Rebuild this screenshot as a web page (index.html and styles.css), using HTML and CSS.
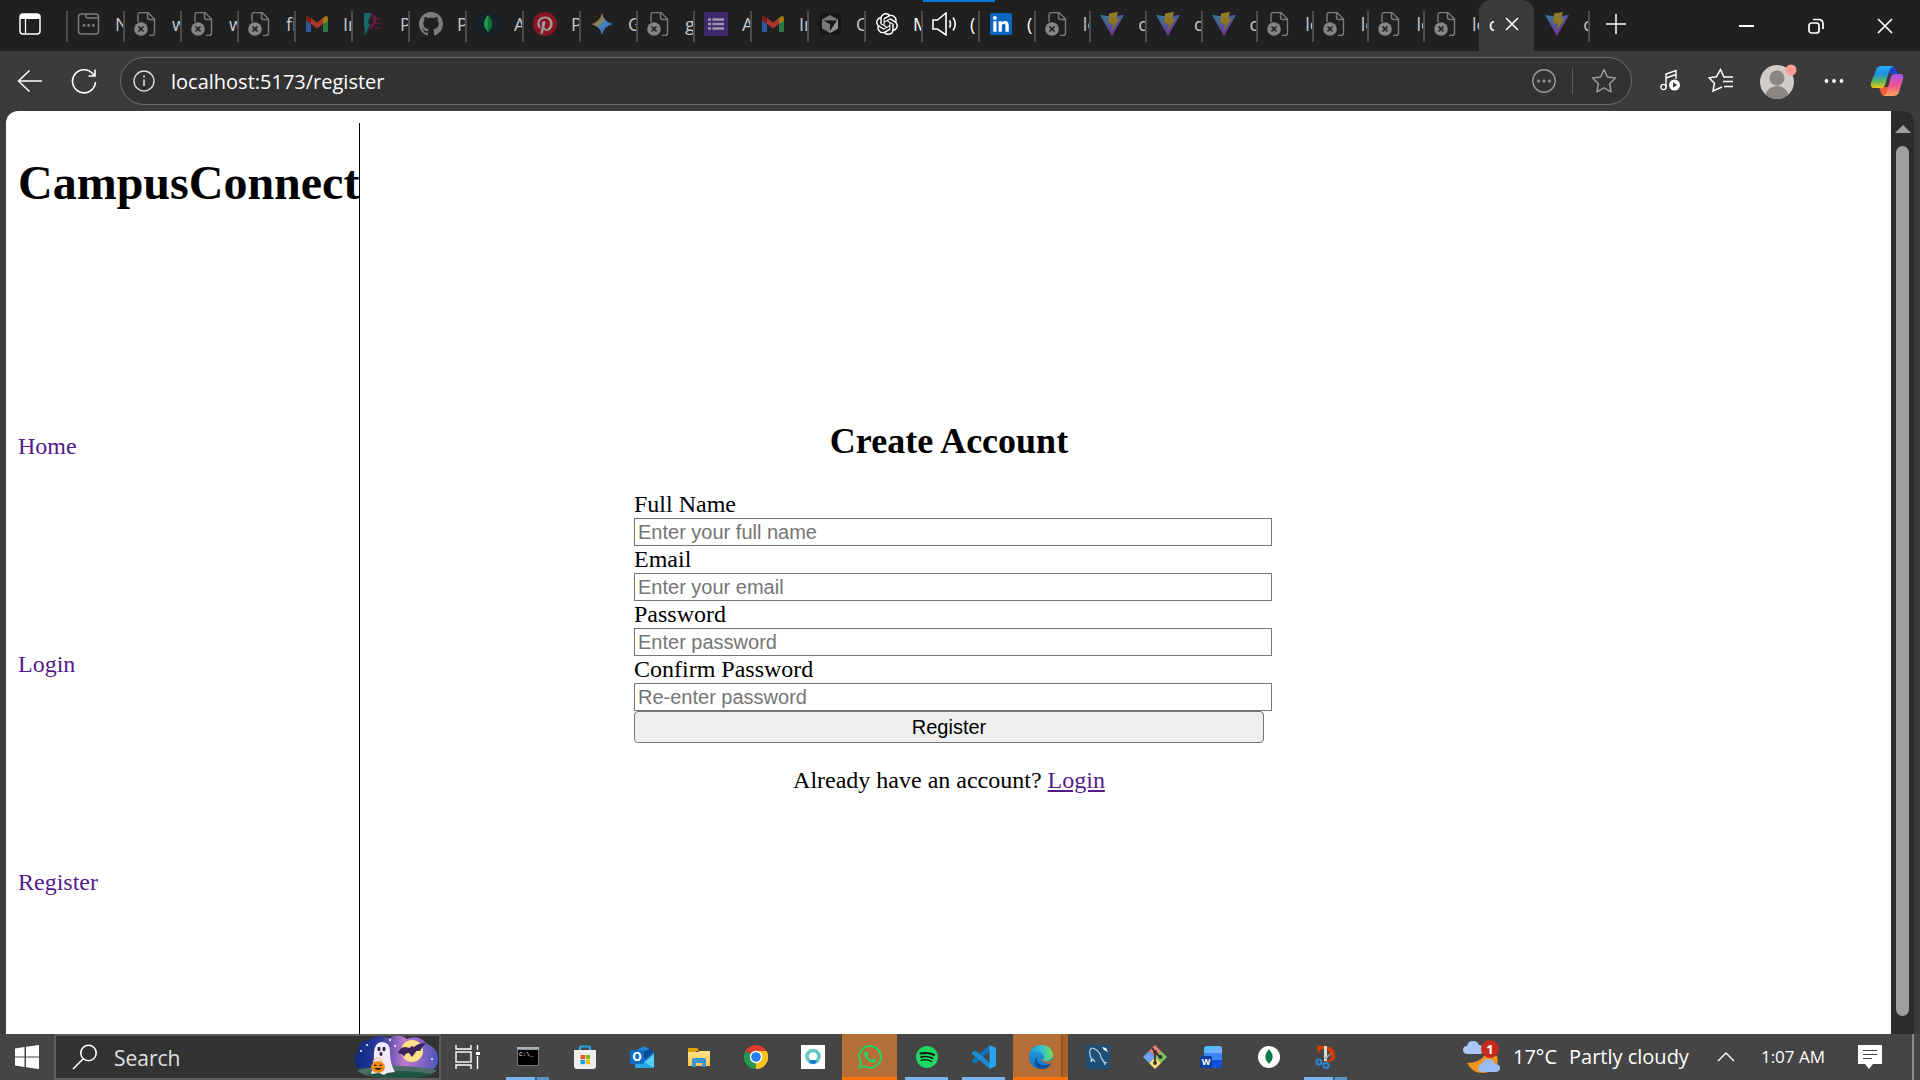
FILE: index.html
```html
<!DOCTYPE html>
<html lang="en">
<head>
<meta charset="utf-8">
<title>CampusConnect</title>
<link rel="stylesheet" href="styles.css">
</head>
<body>
<svg class="sprite" aria-hidden="true">
  <defs>
    <linearGradient id="g-gemini" x1="0" y1="0" x2="1" y2="1"><stop offset=".2" stop-color="#c5443c"/><stop offset=".4" stop-color="#7d8a5a"/><stop offset=".55" stop-color="#3f7ac4"/><stop offset="1" stop-color="#3f7ac4"/></linearGradient>
    <linearGradient id="g-vite" x1="0" y1="0" x2=".6" y2="1"><stop offset="0" stop-color="#2f7f9c"/><stop offset="1" stop-color="#742f9a"/></linearGradient>
    <linearGradient id="g-bolt" x1="0" y1="0" x2="0" y2="1"><stop offset="0" stop-color="#8f8030"/><stop offset="1" stop-color="#8f6a10"/></linearGradient>
    <linearGradient id="g-cop1" x1="0" y1="0" x2="0" y2="1"><stop offset="0" stop-color="#28b0f5"/><stop offset=".35" stop-color="#1b8fe8"/><stop offset=".7" stop-color="#5fb85a"/><stop offset="1" stop-color="#f2c811"/></linearGradient>
    <linearGradient id="g-cop2" x1="0" y1="0" x2="0" y2="1"><stop offset="0" stop-color="#a855f0"/><stop offset=".5" stop-color="#ee5090"/><stop offset="1" stop-color="#ffa657"/></linearGradient>
    <linearGradient id="g-edge" x1="0" y1="0" x2="1" y2="0"><stop offset="0" stop-color="#2294dd"/><stop offset=".5" stop-color="#35c1d0"/><stop offset="1" stop-color="#6fe05a"/></linearGradient>
    <linearGradient id="g-edge2" x1="0" y1="0" x2="0" y2="1"><stop offset="0" stop-color="#2aa5e0"/><stop offset="1" stop-color="#0a6fc9"/></linearGradient>
    <linearGradient id="g-word" x1="0" y1="0" x2="1" y2="1"><stop offset="0" stop-color="#3cc7f5"/><stop offset="1" stop-color="#8fa5ff"/></linearGradient>
    <linearGradient id="g-night" x1="0" y1="0" x2="1" y2="0"><stop offset="0" stop-color="#0b2a7e"/><stop offset=".3" stop-color="#2a3b9c"/><stop offset=".6" stop-color="#c07ad0"/><stop offset="1" stop-color="#4a55bb"/></linearGradient>
    <linearGradient id="g-folder" x1="0" y1="0" x2="0" y2="1"><stop offset="0" stop-color="#ffe08a"/><stop offset="1" stop-color="#fdc94a"/></linearGradient>
  </defs>
  <symbol id="i-newtab" viewBox="0 0 24 24"><g fill="none" stroke="#7b7b7b" stroke-width="1.5"><rect x="1.5" y="2" width="20" height="20" rx="3"/><path d="M9 2v2.5q0 1.500 1.500 1.500H21.500"/></g><g fill="#7b7b7b"><circle cx="7" cy="13.500" r="1.400"/><circle cx="11.700" cy="13.500" r="1.400"/><circle cx="16.400" cy="13.500" r="1.400"/></g></symbol>
  <symbol id="i-filex" viewBox="0 0 24 24"><g fill="none" stroke="#7b7b7b" stroke-width="1.4"><path d="M4 10V3q0-2.500 2.500-2.500H14l6.500 6.500V21q0 2.500-2.500 2.500H15M13.500 1v4.500q0 2 2 2H20"/></g><circle cx="7" cy="17" r="6.800" fill="#858585"/><path d="M4.500 14.500l5 5m0-5l-5 5" stroke="#202020" stroke-width="1.700"/></symbol>
  <symbol id="i-gmail" viewBox="0 0 24 24"><path d="M1 8v11q0 1 1 1h4V10z" fill="#32569c"/><path d="M18 20h4q1 0 1-1V7l-5 4z" fill="#2b7a42"/><path d="M1 6.500v2L6 12V6L4 4.500Q1.500 3 1 6.500z" fill="#7a2019"/><path d="M6 6v6l6 4.500 6-4.500V6l-6 4.500z" fill="#a9352b"/><path d="M18 6v6l5-3.500v-2Q22.500 3 20 4.500z" fill="#a67c0c"/></symbol>
  <symbol id="i-pen" viewBox="0 0 24 24"><path d="M2 1h7.500L6 10l2 3-5.500 11q1-8-.5-10z" fill="#176a6b"/><path d="M8 1q3 1 2.500 6T7 14q4-1 4.500-5T9 1q6 2 5.500 8T5 19q4-3 5-8t-2-10z" fill="#70173a"/><path d="M13.500 7h5M14 11.500h5.500M13 16h6" stroke="#5b1a36" stroke-width="1.500"/></symbol>
  <symbol id="i-github" viewBox="0 0 16 16"><path fill="#7d7d7d" d="M8 0C3.58 0 0 3.58 0 8c0 3.54 2.29 6.53 5.47 7.59.4.07.55-.17.55-.38 0-.19-.01-.82-.01-1.49-2.010.37-2.530-.49-2.690-.94-.09-.23-.48-.94-.82-1.130-.28-.15-.68-.52-.01-.53.63-.01 1.080.58 1.230.82.72 1.210 1.870.87 2.330.66.07-.52.28-.87.51-1.070-1.780-.2-3.640-.89-3.640-3.950 0-.87.31-1.590.82-2.150-.08-.2-.36-1.020.08-2.120 0 0 .67-.21 2.200.82.64-.18 1.320-.27 2-.27.68 0 1.360.09 2 .27 1.530-1.040 2.200-.82 2.200-.82.44 1.100.16 1.920.08 2.120.51.56.82 1.270.82 2.150 0 3.070-1.870 3.750-3.650 3.950.29.25.54.73.54 1.480 0 1.070-.01 1.930-.01 2.200 0 .21.15.46.55.38A8.013 8.013 0 0016 8c0-4.420-3.580-8-8-8z"/></symbol>
  <symbol id="i-mongo" viewBox="0 0 24 24"><circle cx="12" cy="12" r="12" fill="#15222a"/><path d="M12 3q-4 4-4 9 0 4 3.500 7l.5 2 .5-2q3.500-3 3.500-7 0-5-4-9z" fill="#18984a"/><path d="M12 3v18l.5-2q3.500-3 3.500-7 0-5-4-9z" fill="#107038"/></symbol>
  <symbol id="i-pinterest" viewBox="0 0 24 24"><circle cx="12" cy="12" r="11" fill="#9b9b9b"/><path fill="#8a1520" d="M12.017 0C5.396 0 .029 5.367.029 11.987c0 5.079 3.158 9.417 7.618 11.162-.105-.949-.199-2.403.041-3.439.219-.937 1.406-5.957 1.406-5.957s-.359-.72-.359-1.781c0-1.663.967-2.911 2.168-2.911 1.024 0 1.518.769 1.518 1.688 0 1.029-.653 2.567-.992 3.992-.285 1.193.6 2.165 1.775 2.165 2.128 0 3.768-2.245 3.768-5.487 0-2.861-2.063-4.869-5.008-4.869-3.410 0-5.409 2.562-5.409 5.199 0 1.033.394 2.143.889 2.741.099.12.112.225.085.345-.09.375-.293 1.199-.334 1.363-.053.225-.172.271-.401.165-1.495-.69-2.433-2.878-2.433-4.646 0-3.776 2.748-7.252 7.920-7.252 4.158 0 7.392 2.967 7.392 6.923 0 4.135-2.607 7.462-6.233 7.462-1.214 0-2.354-.629-2.758-1.379l-.749 2.848c-.269 1.045-1.004 2.352-1.498 3.146 1.123.345 2.306.535 3.550.535 6.607 0 11.985-5.365 11.985-11.987C23.970 5.390 18.592.026 11.985.026z"/></symbol>
  <symbol id="i-gemini" viewBox="0 0 24 24"><path d="M12 1q2 9 11 11-9 2-11 11-2-9-11-11Q10 10 12 1z" fill="url(#g-gemini)"/></symbol>
  <symbol id="i-forms" viewBox="0 0 24 24"><rect width="24" height="24" rx="1" fill="#40286e"/><path d="M8.500 7.500H20M8.500 12H20M8.500 16.500H20M4 7.500h3M4 12h3M4 16.500h3" stroke="#9c93ad" stroke-width="2.600"/></symbol>
  <symbol id="i-cursor" viewBox="0 0 24 24"><rect x="1" y="1" width="22" height="22" rx="4" fill="#171715"/><path d="M12 3l8 4.500v9L12 21l-8-4.500v-9z" fill="#777"/><path d="M12 12v9l8-4.500v-9z" fill="#929292"/><path d="M5.500 8.500H19L12 19v-7z" fill="#171715"/></symbol>
  <symbol id="i-openai" viewBox="0 0 24 24"><path fill="#fff" d="M22.2819 9.8211a5.9847 5.9847 0 0 0-.5157-4.9108 6.0462 6.0462 0 0 0-6.5098-2.9A6.0651 6.0651 0 0 0 4.9807 4.1818a5.9847 5.9847 0 0 0-3.9977 2.9 6.0462 6.0462 0 0 0 .7427 7.0966 5.98 5.98 0 0 0 .511 4.9107 6.051 6.051 0 0 0 6.5146 2.9001A5.9847 5.9847 0 0 0 13.2599 24a6.0557 6.0557 0 0 0 5.7718-4.2058 5.9894 5.9894 0 0 0 3.9977-2.9001 6.0557 6.0557 0 0 0-.7475-7.0729zm-9.022 12.6081a4.4755 4.4755 0 0 1-2.8764-1.0408l.1419-.0804 4.7783-2.7582a.7948.7948 0 0 0 .3927-.6813v-6.7369l2.02 1.1686a.071.071 0 0 1 .038.052v5.5826a4.504 4.504 0 0 1-4.4945 4.4944zm-9.6607-4.1254a4.4708 4.4708 0 0 1-.5346-3.0137l.142.0852 4.783 2.7582a.7712.7712 0 0 0 .7806 0l5.8428-3.3685v2.3324a.0804.0804 0 0 1-.0332.0615L9.74 19.9502a4.4992 4.4992 0 0 1-6.1408-1.6464zM2.3408 7.8956a4.485 4.485 0 0 1 2.3655-1.9728V11.6a.7664.7664 0 0 0 .3879.6765l5.8144 3.3543-2.0201 1.1685a.0757.0757 0 0 1-.071 0l-4.8303-2.7865A4.504 4.504 0 0 1 2.3408 7.872zm16.5963 3.8558L13.1038 8.364 15.1192 7.2a.0757.0757 0 0 1 .071 0l4.8303 2.7913a4.4944 4.4944 0 0 1-.6765 8.1042v-5.6772a.79.79 0 0 0-.407-.667zm2.0107-3.0231l-.142-.0852-4.7735-2.7818a.7759.7759 0 0 0-.7854 0L9.409 9.2297V6.8974a.0662.0662 0 0 1 .0284-.0615l4.8303-2.7866a4.4992 4.4992 0 0 1 6.6802 4.66zM8.3065 12.863l-2.02-1.1638a.0804.0804 0 0 1-.038-.0567V6.0742a4.4992 4.4992 0 0 1 7.3757-3.4537l-.142.0805L8.704 5.459a.7948.7948 0 0 0-.3927.6813zm1.0976-2.3654l2.602-1.4998 2.6069 1.4998v2.9994l-2.5974 1.4997-2.6067-1.4997Z"/></symbol>
  <symbol id="i-audio" viewBox="0 0 24 24"><path d="M1 8h4.500L14 1v22l-8.500-6H1zM17.500 8.500q2 3.500 0 7M21 5.500q4.500 6.500 0 13" fill="none" stroke="#fff" stroke-width="1.600"/></symbol>
  <symbol id="i-linkedin" viewBox="0 0 24 24"><rect width="24" height="24" rx="2" fill="#0a66c2"/><path fill="#fff" d="M20.447 20.452h-3.554v-5.569c0-1.328-.027-3.037-1.852-3.037-1.853 0-2.136 1.445-2.136 2.939v5.667H9.351V9h3.414v1.561h.046c.477-.9 1.637-1.850 3.370-1.850 3.601 0 4.267 2.370 4.267 5.455v6.286zM5.337 7.433c-1.144 0-2.063-.926-2.063-2.065 0-1.138.92-2.063 2.063-2.063 1.140 0 2.064.925 2.064 2.063 0 1.139-.925 2.065-2.064 2.065zm1.782 13.019H3.555V9h3.564v11.452z"/></symbol>
  <symbol id="i-vite" viewBox="0 0 24 24"><path d="M0 3l11 1.500L24 3 12 24z" fill="url(#g-vite)"/><path d="M9 1.500L18 0l-2 6.500h3.500L12 18.500l1-7H8z" fill="url(#g-bolt)"/></symbol>
</svg>

<header class="titlebar">
  <button class="workspace" aria-label="Tab actions"><svg width="24" height="24" viewBox="0 0 24 24"><rect x="2" y="2" width="20" height="20" rx="3" fill="none" stroke="#fff" stroke-width="1.500"/><path d="M2 7V5q0-3 3-3h14q3 0 3 3v2z" fill="#fff"/><path d="M7.500 7v14" stroke="#fff" stroke-width="1.300"/></svg></button>
  <nav class="tabs" aria-label="Open tabs">
    <button class="tab"><svg class="ico"><use href="#i-newtab"/></svg><span>N</span></button>
    <button class="tab"><svg class="ico"><use href="#i-filex"/></svg><span>w</span></button>
    <button class="tab"><svg class="ico"><use href="#i-filex"/></svg><span>w</span></button>
    <button class="tab"><svg class="ico"><use href="#i-filex"/></svg><span>fi</span></button>
    <button class="tab"><svg class="ico"><use href="#i-gmail"/></svg><span>In</span></button>
    <button class="tab"><svg class="ico"><use href="#i-pen"/></svg><span>P</span></button>
    <button class="tab"><svg class="ico"><use href="#i-github"/></svg><span>P</span></button>
    <button class="tab"><svg class="ico"><use href="#i-mongo"/></svg><span>A</span></button>
    <button class="tab"><svg class="ico"><use href="#i-pinterest"/></svg><span>P</span></button>
    <button class="tab"><svg class="ico"><use href="#i-gemini"/></svg><span>G</span></button>
    <button class="tab"><svg class="ico"><use href="#i-filex"/></svg><span>g</span></button>
    <button class="tab"><svg class="ico"><use href="#i-forms"/></svg><span>A</span></button>
    <button class="tab"><svg class="ico"><use href="#i-gmail"/></svg><span>In</span></button>
    <button class="tab"><svg class="ico"><use href="#i-cursor"/></svg><span>C</span></button>
    <button class="tab awake"><svg class="ico ico-s"><use href="#i-openai"/></svg><span>M</span></button>
    <button class="tab awake"><svg class="ico"><use href="#i-audio"/></svg><span>(</span></button>
  </nav>
  <nav class="tabs tabs-end" aria-label="More open tabs">
    <button class="tab awake"><svg class="ico ico-s"><use href="#i-linkedin"/></svg><span>(</span></button>
    <button class="tab"><svg class="ico"><use href="#i-filex"/></svg><span>lo</span></button>
    <button class="tab"><svg class="ico"><use href="#i-vite"/></svg><span>c</span></button>
    <button class="tab"><svg class="ico"><use href="#i-vite"/></svg><span>c</span></button>
    <button class="tab"><svg class="ico"><use href="#i-vite"/></svg><span>c</span></button>
    <button class="tab"><svg class="ico"><use href="#i-filex"/></svg><span>lo</span></button>
    <button class="tab"><svg class="ico"><use href="#i-filex"/></svg><span>lo</span></button>
    <button class="tab"><svg class="ico"><use href="#i-filex"/></svg><span>lo</span></button>
    <button class="tab"><svg class="ico"><use href="#i-filex"/></svg><span>lo</span></button>
    <div class="tab-active"><span>c</span><button aria-label="Close tab"><svg width="14" height="14" viewBox="0 0 14 14"><path d="M1 1l12 12M13 1L1 13" stroke="#fff" stroke-width="1.600"/></svg></button></div>
    <button class="tab last"><svg class="ico"><use href="#i-vite"/></svg><span>c</span></button>
  </nav>
  <button class="new-tab" aria-label="New tab"><svg width="22" height="22" viewBox="0 0 22 22"><path d="M11 1v20M1 11h20" stroke="#fff" stroke-width="1.500"/></svg></button>
  <div class="window-controls">
    <button aria-label="Minimize"><svg width="16" height="16" viewBox="0 0 16 16"><path d="M0 8h15" stroke="#fff" stroke-width="2"/></svg></button>
    <button aria-label="Restore"><svg width="16" height="16" viewBox="0 0 16 16"><g fill="none" stroke="#fff" stroke-width="1.700"><rect x="1" y="5" width="10" height="10" rx="2.500"/><path d="M5 1.500h5.500q4.500 0 4.500 4.500v5"/></g></svg></button>
    <button aria-label="Close"><svg width="16" height="16" viewBox="0 0 16 16"><path d="M1 1l14 14M15 1L1 15" stroke="#fff" stroke-width="1.700"/></svg></button>
  </div>
</header>

<div class="toolbar">
  <button aria-label="Back"><svg width="26" height="24" viewBox="0 0 26 24"><path d="M1 12h24M12.500 1.500L1.500 12l11 10.500" fill="none" stroke="#fff" stroke-width="1.500"/></svg></button>
  <button aria-label="Refresh"><svg width="26" height="26" viewBox="0 0 26 26"><path d="M24.500 14A11.500 11.500 0 1 1 21.500 5.500L24 8M24 1.500V8h-6.500" fill="none" stroke="#fff" stroke-width="1.600"/></svg></button>
  <div class="address">
    <svg width="22" height="22" viewBox="0 0 22 22"><circle cx="11" cy="11" r="10" fill="none" stroke="#ddd" stroke-width="1.400"/><path d="M11 9.500V16M11 5.500v2" stroke="#ddd" stroke-width="1.600"/></svg>
    <input type="text" aria-label="Address" value="localhost:5173/register">
    <button aria-label="Page options"><svg width="24" height="24" viewBox="0 0 24 24"><circle cx="12" cy="12" r="11.200" fill="none" stroke="#9a9a9a" stroke-width="1.400"/><g fill="#9a9a9a"><circle cx="6.500" cy="12" r="1.500"/><circle cx="12" cy="12" r="1.500"/><circle cx="17.500" cy="12" r="1.500"/></g></svg></button>
    <button class="favorite" aria-label="Add to favorites"><svg width="26" height="26" viewBox="0 0 24 24"><path d="M12 1.500l3.200 6.800 7.300 1-5.300 5.200 1.300 7.500-6.500-3.700L5.500 22l1.300-7.500L1.500 9.300l7.300-1z" fill="none" stroke="#9a9a9a" stroke-width="1.400" stroke-linejoin="round"/></svg></button>
  </div>
  <div class="actions">
    <button aria-label="Media"><svg width="22" height="24" viewBox="0 0 22 24"><g fill="none" stroke="#fff" stroke-width="1.400"><path d="M6 18V5l10-3.500V10M6 9l10-3.500"/><circle cx="3.500" cy="18" r="2.600"/></g><circle cx="14.500" cy="16" r="5.500" fill="#fff"/><path d="M13 13.200v5.600l4.200-2.800z" fill="#3b3b3b"/></svg></button>
    <button aria-label="Favorites"><svg width="26" height="26" viewBox="0 0 26 26"><path d="M14 19l-9 4 1.400-7.800L1 9.800l7.400-1L12.500 1.500 16 9h9M15 13.500h10M16 18.500h9" fill="none" stroke="#fff" stroke-width="1.500"/></svg></button>
    <button aria-label="Profile"><svg width="38" height="38" viewBox="0 0 38 38"><defs><clipPath id="c-av"><circle cx="17" cy="20" r="17"/></clipPath></defs><g clip-path="url(#c-av)"><rect width="38" height="38" fill="#cfccc9"/><circle cx="17" cy="16" r="7.500" fill="#8b8683"/><circle cx="17" cy="36" r="12" fill="#8b8683"/></g><circle cx="31" cy="8" r="5.500" fill="#fa9c98"/></svg></button>
    <button aria-label="Settings"><svg width="20" height="6" viewBox="0 0 20 6"><g fill="#fff"><circle cx="2.500" cy="3" r="1.900"/><circle cx="10" cy="3" r="1.900"/><circle cx="17.500" cy="3" r="1.900"/></g></svg></button>
    <button aria-label="Copilot"><svg width="34" height="32" viewBox="0 0 34 32"><path d="M17 1h6q2 0 3 3l2 5h-8z" fill="#1a48c8"/><path d="M9 22l2 6q1 3 4 3h5l4-9z" fill="#f0603c"/><path d="M11 1h13q-4 1-5 6l-4 13q-1 3-4 3H4q-4 0-3-5L6 5q1-4 5-4z" fill="url(#g-cop1)"/><path d="M23 31H13q3-1 4-5l4-14q1-3 4-3h5q4 0 3 5l-4 13q-1 4-6 4z" fill="url(#g-cop2)"/></svg></button>
  </div>
</div>

<div class="viewport">
  <div class="page">
    <div class="layout">
      <aside class="sidebar">
        <h1>CampusConnect</h1>
        <a href="#home">Home</a>
        <a href="#login">Login</a>
        <a href="#register">Register</a>
      </aside>
      <main class="content">
        <section class="signup">
          <h2>Create Account</h2>
          <form>
            <label for="name">Full Name</label>
            <input id="name" type="text" placeholder="Enter your full name">
            <label for="email">Email</label>
            <input id="email" type="email" placeholder="Enter your email">
            <label for="password">Password</label>
            <input id="password" type="password" placeholder="Enter password">
            <label for="confirm">Confirm Password</label>
            <input id="confirm" type="password" placeholder="Re-enter password">
            <button type="submit">Register</button>
          </form>
          <p>Already have an account? <a href="#login">Login</a></p>
        </section>
      </main>
    </div>
  </div>
  <div class="scrollbar"><svg width="16" height="8" viewBox="0 0 16 8"><path d="M8 0l8 8H0z" fill="#9f9f9f"/></svg><div class="thumb"></div></div>
</div>

<footer class="taskbar">
  <button class="start" aria-label="Start"><svg width="24" height="24" viewBox="0 0 24 24"><path fill="#fff" d="M0 3.500L9.500 2v9.500H0zM11 1.800L24 0v11.500H11zM0 12.500h9.500V22L0 20.500zM11 12.500h13V24l-13-1.800z"/></svg></button>
  <div class="search">
    <svg width="26" height="26" viewBox="0 0 26 26"><circle cx="16.500" cy="9" r="7.700" fill="none" stroke="#fff" stroke-width="1.600"/><path d="M11 15L1 25" stroke="#fff" stroke-width="1.600"/></svg>
    <input type="text" aria-label="Search" placeholder="Search">
    <svg width="84" height="42" viewBox="0 0 84 42"><path d="M2 32Q-3 22 3 15 5 4 16 3 22-2 34 2 44-3 52 3 64-2 72 8 84 12 83 24q0 8-8 10z" fill="url(#g-night)"/><path d="M2 34q38-8 80 0-6 8-40 8Q8 42 2 34z" fill="#4b6d66"/><path d="M12 38q30-6 66 0-12 4-36 4-20 0-30-4z" fill="#1f5540"/><circle cx="57" cy="15" r="11" fill="#ffe089"/><path d="M43 17q2-6 7-6l5 1 1-2 3 1q4-4 12-4-4 4-6 8-4-1-5 2l-3 4-3-4q-4 0-5 4-2-4-6-4z" fill="#3b2560"/><path d="M19 16q1-10 8-10 8 0 8 10 0 12 5 20l-8 1-3 2-5-2-8 1q3-8 3-22z" fill="#f1e9fa"/><ellipse cx="24" cy="13" rx="1.500" ry="2.200" fill="#2b2140"/><ellipse cx="29" cy="13" rx="1.500" ry="2.200" fill="#2b2140"/><ellipse cx="26" cy="18" rx="1.500" ry="2" fill="#2b2140"/><ellipse cx="23" cy="31" rx="7" ry="6" fill="#f08a1c"/><path d="M18 26q5-8 10 0" fill="none" stroke="#f6c889" stroke-width="1.300"/><path d="M19 32q4 4 8 0zM20 28l2 2h-3zM26 28l1 2h-3z" fill="#3b2110"/><g fill="#fff"><circle cx="12" cy="9" r="1"/><circle cx="35" cy="4" r="1"/><circle cx="6" cy="15" r="1"/><circle cx="77" cy="23" r="1"/><circle cx="40" cy="10" r="1"/></g></svg>
  </div>
  <button class="taskview" aria-label="Task view"><svg width="26" height="24" viewBox="0 0 26 24"><g fill="none" stroke="#fff" stroke-width="1.400"><path d="M1 0v4h15V0M1 24v-4h15v4"/><rect x="1" y="7" width="15" height="10"/><path d="M22.500 0v5M22.500 11v13"/></g><rect x="21" y="7" width="4" height="3" fill="#fff"/></svg></button>
  <div class="apps">
    <button class="app open multi" aria-label="Command Prompt"><svg width="24" height="24" viewBox="0 0 24 24"><rect x="1" y="2" width="22" height="19" fill="#777"/><rect x="1" y="2" width="22" height="2.500" fill="#a9b3bb"/><rect x="2" y="5" width="20" height="15" fill="#000"/><text x="3" y="11" class="cmd">C:\_</text></svg></button>
    <button class="app" aria-label="Microsoft Store"><svg width="24" height="24" viewBox="0 0 24 24"><path d="M7 6V2.500q0-1 1-1h8q1 0 1 1V6" fill="none" stroke="#27a8e4" stroke-width="2.200"/><path d="M1 5h22v16q0 3-3 3H4q-3 0-3-3z" fill="#efefef"/><path d="M7.500 10H12v4.200H7.500z" fill="#f25022"/><path d="M12.800 10h4.200v4.200h-4.200z" fill="#7fba00"/><path d="M7.500 15H12v4.200H7.500z" fill="#00a4ef"/><path d="M12.800 15h4.200v4.200h-4.200z" fill="#ffb900"/></svg></button>
    <button class="app" aria-label="Outlook"><svg width="24" height="24" viewBox="0 0 24 24"><path d="M5 6l9-5 10 6v14q0 2-2 2H7q-2 0-2-2z" fill="#1f87d6"/><path d="M12 7l8-3 4 3-9 8z" fill="#0b4a94"/><path d="M24 9v12q0 2-2 2H8z" fill="#4fd3f5"/><path d="M5 12l19 11H7q-2 0-2-2z" fill="#27a5e8"/><rect y="5" width="14" height="14" rx="1.500" fill="#0f6cc4"/><text x="7" y="16" class="logo-letter">O</text></svg></button>
    <button class="app" aria-label="File Explorer"><svg width="24" height="24" viewBox="0 0 24 24"><path d="M1 3h9l2 3h-3v3H1z" fill="#e0a106"/><path d="M1 7h10l2-1h10v15H1z" fill="url(#g-folder)"/><path d="M5 22v-7q0-2 2-2h10q2 0 2 2v7h-4v-4H9v4z" fill="#3a93db"/></svg></button>
    <button class="app" aria-label="Chrome"><svg width="24" height="24" viewBox="0 0 24 24"><path d="M12 12L1.600 6A12 12 0 0 1 22.400 6z" fill="#e33b2e"/><path d="M12 12l10.400-6A12 12 0 0 1 12 24z" fill="#fcc31e"/><path d="M12 12v12A12 12 0 0 1 1.600 6z" fill="#249a4b"/><path d="M12 6h10.400A12 12 0 0 1 12 24l5.200-9z" fill="#fcc31e"/><circle cx="12" cy="12" r="6.200" fill="#fff"/><circle cx="12" cy="12" r="4.800" fill="#2b7cf0"/></svg></button>
    <button class="app" aria-label="Assistant"><svg width="24" height="24" viewBox="0 0 24 24"><rect width="24" height="24" fill="#fff"/><circle cx="12" cy="11.500" r="6" fill="none" stroke="#5fc9c4" stroke-width="3.600"/><path d="M8 16q4-2 8 0-1 3-4 3t-4-3z" fill="#1e78d0"/></svg></button>
    <button class="app alert" aria-label="WhatsApp"><svg width="24" height="24" viewBox="0 0 24 24"><path fill="#25d366" d="M17.472 14.382c-.297-.149-1.758-.867-2.030-.967-.273-.099-.471-.148-.67.15-.197.297-.767.966-.94 1.164-.173.199-.347.223-.644.075-.297-.15-1.255-.463-2.390-1.475-.883-.788-1.480-1.761-1.653-2.059-.173-.297-.018-.458.13-.606.134-.133.298-.347.446-.52.149-.174.198-.298.298-.497.099-.198.05-.371-.025-.52-.075-.149-.669-1.612-.916-2.207-.242-.579-.487-.5-.669-.51-.173-.008-.371-.01-.57-.01-.198 0-.52.074-.792.372-.272.297-1.040 1.016-1.040 2.479 0 1.462 1.065 2.875 1.213 3.074.149.198 2.096 3.200 5.077 4.487.709.306 1.262.489 1.694.625.712.227 1.360.195 1.871.118.571-.085 1.758-.719 2.006-1.413.248-.694.248-1.289.173-1.413-.074-.124-.272-.198-.57-.347m-5.421 7.403h-.004a9.870 9.870 0 01-5.031-1.378l-.361-.214-3.741.982.998-3.648-.235-.374a9.860 9.860 0 01-1.510-5.260c.001-5.450 4.436-9.884 9.888-9.884 2.640 0 5.122 1.030 6.988 2.898a9.825 9.825 0 012.893 6.994c-.003 5.450-4.437 9.884-9.885 9.884m8.413-18.297A11.815 11.815 0 0012.050 0C5.495 0 .16 5.335.157 11.892c0 2.096.547 4.142 1.588 5.945L.057 24l6.305-1.654a11.882 11.882 0 005.683 1.448h.005c6.554 0 11.890-5.335 11.893-11.893a11.821 11.821 0 00-3.480-8.413z"/></svg></button>
    <button class="app open" aria-label="Spotify"><svg width="22" height="22" viewBox="0 0 24 24"><circle cx="12" cy="12" r="11.500" fill="#111"/><path fill="#1ed760" d="M12 0C5.400 0 0 5.400 0 12s5.400 12 12 12 12-5.400 12-12S18.660 0 12 0zm5.521 17.340c-.24.359-.66.48-1.021.24-2.820-1.740-6.360-2.101-10.561-1.141-.418.122-.779-.179-.899-.539-.12-.421.18-.78.54-.9 4.560-1.021 8.520-.6 11.640 1.320.42.18.479.659.301 1.020zm1.440-3.300c-.301.42-.841.6-1.262.3-3.239-1.980-8.159-2.580-11.939-1.380-.479.12-1.020-.12-1.140-.6-.12-.48.12-1.021.6-1.141C9.600 9.900 15 10.561 18.720 12.840c.361.181.54.78.241 1.200zm.12-3.360C15.240 8.400 8.820 8.160 5.160 9.301c-.6.179-1.200-.181-1.380-.721-.18-.601.18-1.200.72-1.381 4.260-1.260 11.280-1.020 15.721 1.621.539.3.719 1.020.419 1.560-.299.421-1.020.599-1.559.3z"/></svg></button>
    <button class="app open" aria-label="Visual Studio Code"><svg width="24" height="24" viewBox="0 0 24 24"><path d="M18 0v6L4 18l-1.500.2L0 16.500v-1.200z" fill="#1273b8"/><path d="M18 24v-6L4 6l-1.500-.2L0 7.500v1.200z" fill="#1c8ad6"/><path d="M17.500 0L24 3v18l-6.500 3z" fill="#2aa3ef"/></svg></button>
    <button class="app alert current" aria-label="Edge"><svg width="24" height="24" viewBox="0 0 24 24"><circle cx="12" cy="12" r="12" fill="url(#g-edge2)"/><path d="M.5 9Q3 0 12 0q11 0 12 10 0 5-6 6-4 0-4-2 2-2 0-5-4-4-9-2-3 1-4.500 2z" fill="url(#g-edge)"/><path d="M8 12q-1 6 5 8 6 1 10-3-4 8-12 7-6-3-5-8 0-2 2-4z" fill="#0d4f9e"/><path d="M13.500 13.500q0 3 5 3 3 0 5-2l1.500 0-2 3.500q-5 2-9-1-3-3-.5-3.500z" fill="#b46e36"/></svg></button>
    <button class="app" aria-label="MySQL Workbench"><svg width="24" height="24" viewBox="0 0 24 24"><rect width="24" height="24" rx="3" fill="#1d4f77"/><path d="M5 17q1-3-1-7-1-6 2-7 5 1 8 6 1 5 4 8l3 1M5 17l2-3 2 3M18 17l1 3" fill="none" stroke="#c7d6e2" stroke-width="1.200"/><path d="M16 2l2 3 4 2-2-4z" fill="#fff"/></svg></button>
    <button class="app" aria-label="Git"><svg width="24" height="24" viewBox="0 0 24 24"><path d="M12 0l6 6-6 6-6-6z" fill="#f47c7c"/><path d="M18 6l6 6-6 6-6-6z" fill="#7ec45c"/><path d="M12 12l6 6-6 6-6-6z" fill="#ffe27a"/><path d="M6 6l6 6-6 6-6-6z" fill="#6ea0f5"/><path d="M9 3l3 4v12M12 7l5 5" stroke="#333" stroke-width="1.800" fill="none"/><g fill="#333"><circle cx="12" cy="7" r="2"/><circle cx="17.500" cy="12" r="2"/><circle cx="12" cy="18" r="2"/></g></svg></button>
    <button class="app" aria-label="Word"><svg width="24" height="24" viewBox="0 0 24 24"><rect x="4" y="1" width="18" height="22" rx="2.500" fill="#1450d8"/><path d="M4 8V4q0-3 3-3h12q3 0 3 3v4z" fill="url(#g-word)"/><path d="M4 8h18v7H4z" fill="#3a86f5"/><rect x="0" y="11" width="12" height="12" rx="2" fill="#0b3ea0"/><text x="6" y="20" class="logo-letter small">W</text></svg></button>
    <button class="app" aria-label="MongoDB Compass"><svg width="22" height="22" viewBox="0 0 24 24"><circle cx="12" cy="12" r="12" fill="#fff"/><path d="M12 3.500q-4 4-4 8.500 0 4 3.500 6.500l.5 2 .5-2Q16 16 16 12q0-4.500-4-8.500z" fill="#0b7a4c"/></svg></button>
    <button class="app open multi" aria-label="Snipping Tool"><svg width="24" height="24" viewBox="0 0 24 24"><path d="M4 1q5-1 9 .5 8 1 8 9.500 0 6-8 6l-2-1q6 0 6-5-1-6-7-7Q5 4 5 8 2 5 4 1z" fill="#d83b01"/><path d="M10 1h3v15h-3z" fill="#ddd"/><path d="M18 7l-6 8-2-2z" fill="#aaa"/><g fill="none" stroke="#2a8ad8" stroke-width="2"><circle cx="5" cy="17" r="2.500"/><circle cx="12" cy="20.500" r="2.500"/></g></svg></button>
  </div>
  <div class="tray">
    <button class="weather"><svg width="38" height="34" viewBox="0 0 38 34"><path d="M4 23q12 0 17-7h13q2 8-2 12-6 5-12 5-11 0-16-10z" fill="#f2941d"/><path d="M5 14q-5 0-5-4t4-4q1-5 6-5t6 4q4 0 5 4t-4 5z" fill="#a9c6f5"/><path d="M20 32q-5 0-5-4t4-4q1-5 6-5t7 5q5 0 5 4t-5 4z" fill="#9bbcf2"/><circle cx="27" cy="9" r="9" fill="#c42b1c"/><text x="27" y="14" class="badge">1</text></svg><span>17°C</span><span class="gap">Partly cloudy</span></button>
    <button class="chevron" aria-label="Show hidden icons"><svg width="18" height="10" viewBox="0 0 18 10"><path d="M1 9l8-8 8 8" fill="none" stroke="#fff" stroke-width="1.400"/></svg></button>
    <time>1:07 AM</time>
    <button class="notify" aria-label="Notifications"><svg width="24" height="24" viewBox="0 0 24 24"><path d="M0 0h24v19H15l-4 5-4-5H0z" fill="#fff"/><path d="M5 5.500h14M5 9.500h14M5 13.500h9" stroke="#444" stroke-width="1.200"/></svg></button>
  </div>
</footer>
</body>
</html>
```
FILE: styles.css
```css
* { box-sizing: border-box; }

body {
  margin: 0;
  height: 100vh;
  display: flex;
  flex-direction: column;
  overflow: hidden;
  background: #3b3b3b;
  color: #fff;
  font-family: "Open Sans", "Noto Sans", sans-serif;
}

button {
  padding: 0;
  border: 0;
  background: none;
  color: inherit;
  font: inherit;
}

svg { display: block; flex: none; }
.sprite { position: absolute; width: 0; height: 0; }

/* Title bar and tabs */
.titlebar {
  position: relative;
  flex: none;
  display: flex;
  height: 51px;
  background: #202020;
}
.titlebar > button { display: flex; align-items: center; height: 48px; }
.workspace { width: 66px; padding-left: 18px; }

.tabs { display: grid; grid-template-columns: repeat(16, 57px); }
.tabs-end { grid-template-columns: repeat(11, 1fr); width: 612px; }

.tab {
  position: relative;
  display: flex;
  align-items: center;
  gap: 14px;
  height: 48px;
  padding-left: 11px;
  overflow: hidden;
  color: #c8c8c8;
  font-size: 18px;
  line-height: 24px;
}
.tab::before {
  content: "";
  position: absolute;
  left: 0;
  top: 11px;
  width: 2px;
  height: 31px;
  background: #4c4c4c;
}
.tab span { width: 8px; overflow: hidden; white-space: nowrap; text-align: left; }
.tab.awake { color: #fff; }
.tab-active + .tab::before { display: none; }
.tab.last::after {
  content: "";
  position: absolute;
  right: 0;
  top: 11px;
  width: 2px;
  height: 31px;
  background: #4c4c4c;
}
.ico { width: 24px; height: 24px; }
.ico-s { padding: 1px; }

.titlebar::after {
  content: "";
  position: absolute;
  left: 923px;
  top: 0;
  width: 72px;
  height: 2px;
  background: #0078d4;
}

.tab-active {
  display: flex;
  align-items: center;
  gap: 11px;
  height: 51px;
  padding: 0 0 3px 10px;
  border-radius: 12px 12px 0 0;
  background: #3b3b3b;
  font-size: 18px;
  line-height: 24px;
}
.tab-active span { width: 5px; overflow: hidden; }

.new-tab { padding-left: 15px; }
.window-controls { display: flex; align-items: center; gap: 53px; margin-left: auto; padding-right: 27px; }

/* Toolbar */
.toolbar {
  flex: none;
  display: flex;
  align-items: center;
  gap: 28px;
  height: 60px;
  padding: 0 16px 0 17px;
}
.address {
  flex: 1;
  display: flex;
  align-items: center;
  gap: 16px;
  height: 48px;
  margin-left: -5px;
  padding: 0 14px 0 12px;
  border: 1px solid #6b6b6b;
  border-radius: 24px;
  background: #323232;
}
.address input {
  flex: 1;
  min-width: 0;
  padding: 1px 0 0;
  border: 0;
  background: none;
  color: #fff;
  font: 20px/28px "Open Sans", "Noto Sans", sans-serif;
}
.favorite { padding: 0 0 0 18px; border-left: 1px solid #5c5c5c; }
.actions { display: flex; align-items: center; gap: 26px; }

/* Browser viewport */
.viewport {
  flex: 1;
  min-height: 0;
  display: flex;
  margin: 0 6px;
  overflow: hidden;
  border-radius: 12px 12px 0 0;
  background: #2c2c2c;
}
.page {
  flex: 1;
  padding: 12px 12px 0;
  overflow: hidden;
  background: #fff;
  color: #000;
  font: 24px/27px "Liberation Serif", "Times New Roman", serif;
}
.scrollbar {
  display: flex;
  flex-direction: column;
  align-items: center;
  gap: 13px;
  width: 23px;
  padding: 14px 0 18px;
}
.thumb { flex: 1; width: 13px; border-radius: 7px; background: #9f9f9f; }

/* Application */
.layout { display: flex; height: calc(100% + 52px); }
.sidebar {
  flex: none;
  display: flex;
  flex-direction: column;
  align-items: flex-start;
  gap: 191px;
  width: 342px;
  border-right: 1px solid #000;
}
.sidebar h1 { margin: 32px 0; font-size: 48px; line-height: 55px; }
.sidebar a { text-decoration: none; }
a { color: #551a8b; }

.content { flex: 1; display: flex; align-items: center; padding-left: 274px; }
.signup { width: 630px; }
.signup h2 { margin: 30px 0 29px; font-size: 36px; line-height: 41px; text-align: center; }
.signup label { display: block; }
.signup input {
  display: block;
  width: calc(100% + 8px);
  height: 28px;
  padding: 1px 3px;
  border: 1px solid #767676;
  border-radius: 0;
  background: #fff;
  font: 20px/24px "Liberation Sans", Arial, sans-serif;
}
.signup input::placeholder { color: #757575; }
.signup button {
  display: block;
  width: 100%;
  height: 32px;
  border: 1px solid #767676;
  border-radius: 4px;
  background: #efefef;
  font: 20px/24px "Liberation Sans", Arial, sans-serif;
}
.signup p { margin: 24px 0; text-align: center; }

/* Taskbar */
.taskbar {
  flex: none;
  display: flex;
  align-items: stretch;
  height: 46px;
  background: #454545;
}
.start { width: 54px; padding-left: 15px; }
.search {
  display: flex;
  align-items: center;
  gap: 16px;
  width: 387px;
  padding-left: 16px;
  border: 2px solid #5c5c5c;
  background: #323232;
}
.search input {
  flex: 1;
  min-width: 0;
  padding: 2px 0 0;
  border: 0;
  background: none;
  font: 21px/30px "Open Sans", "Noto Sans", sans-serif;
}
.search input::placeholder { color: #e0e0e0; }
.taskview { width: 58px; padding-left: 14px; }
.apps { display: grid; grid-template-columns: repeat(15, 57px); }
.app { position: relative; display: flex; align-items: center; justify-content: center; }
.app.open::after {
  content: "";
  position: absolute;
  left: 7px;
  right: 7px;
  bottom: 0;
  height: 3px;
  background: #76b5ef;
}
.app.multi::after { background: linear-gradient(90deg, #76b5ef 29px, #45607a 29px, #45607a 31px, #5c93c6 31px); }
.app.alert { width: 55px; margin-left: 1px; border-bottom: 3px solid #ff7300; padding-top: 3px; background: #b46e36; }
.app.current { background: linear-gradient(90deg, #b46e36 48px, #95531f 48px, #95531f 50px, #a8622b 50px); }

.tray {
  display: flex;
  align-items: center;
  margin-left: auto;
  margin-right: 6px;
  padding-right: 30px;
  border-right: 2px solid #8a8a8a;
  font-size: 20px;
  line-height: 28px;
}
.weather { display: flex; align-items: center; gap: 12px; }
.chevron { padding: 0 26px 0 28px; }
.tray time { font-size: 17px; }
.notify { padding-left: 33px; }

.cmd { fill: #fff; font: 6px "Liberation Mono", monospace; }
.logo-letter { fill: #fff; font: bold 12px "Open Sans", sans-serif; text-anchor: middle; }
.logo-letter.small { font-size: 9px; }
.badge { fill: #fff; font: bold 13px "Open Sans", sans-serif; text-anchor: middle; }
```
